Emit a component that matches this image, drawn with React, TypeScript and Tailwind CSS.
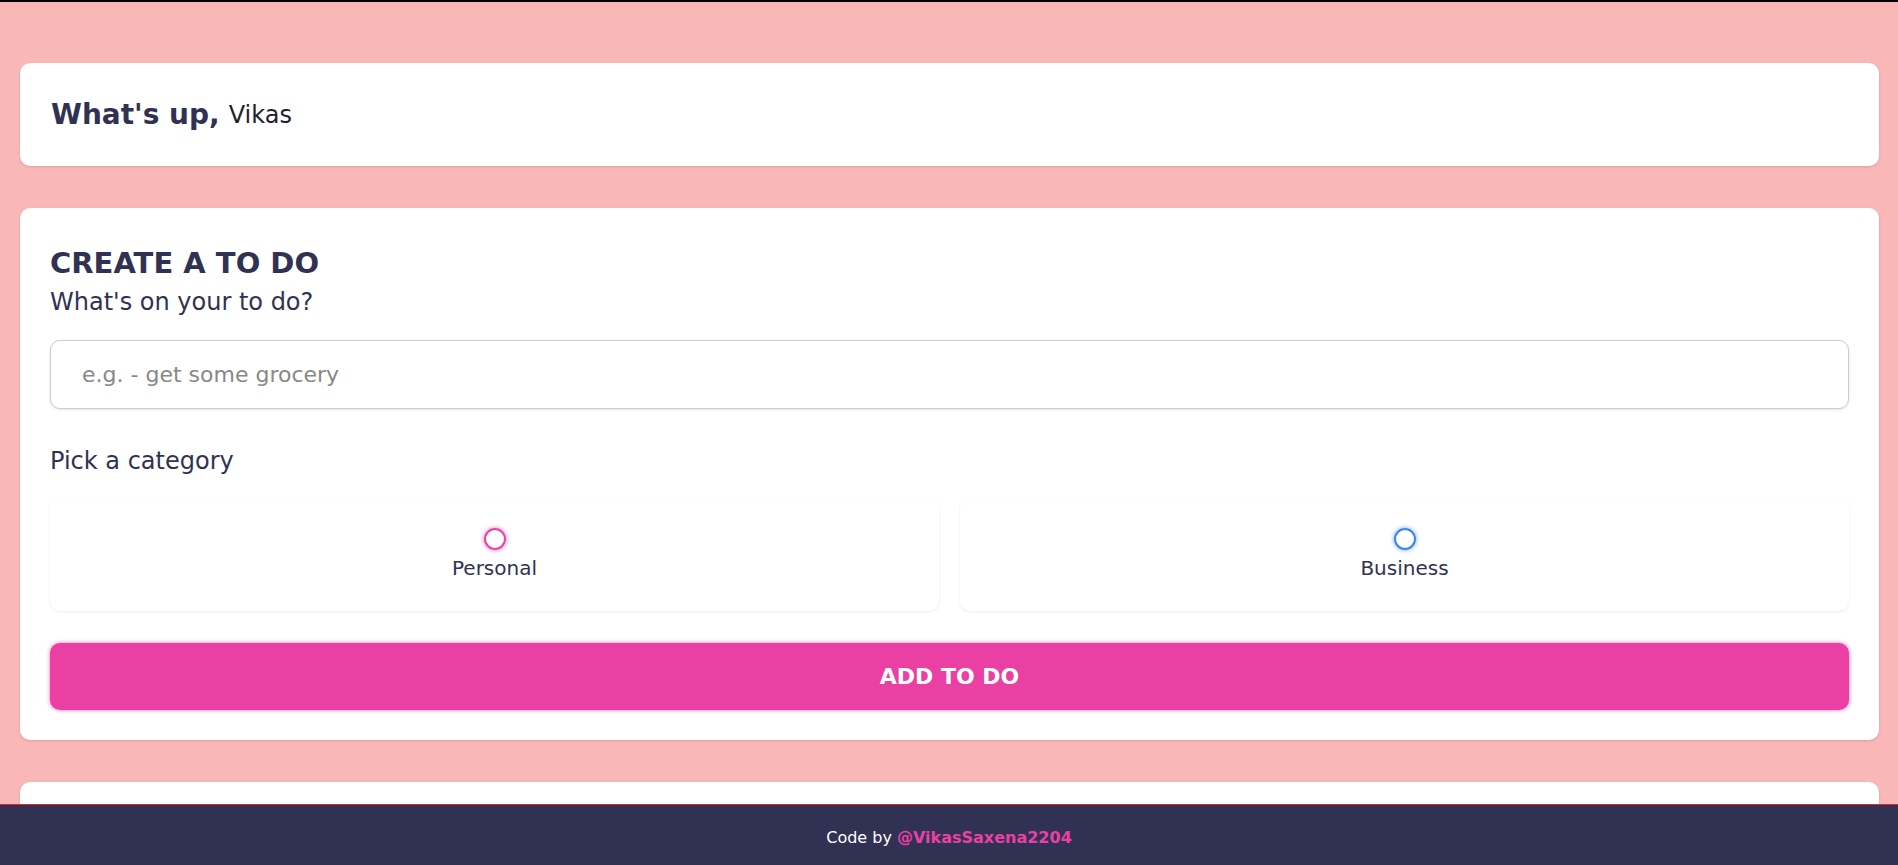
import React, { useState } from 'react';

const FONT = { fontFamily: '"DejaVu Sans", "Noto Sans", sans-serif' };

type Category = 'personal' | 'business';

const Bubble: React.FC<{ kind: Category; checked: boolean }> = ({ kind, checked }) => (
  <span
    className={`flex items-center justify-center w-[22px] h-[22px] rounded-full border-2 ${
      kind === 'personal'
        ? 'border-[#ea40a4] shadow-[0_0_4px_rgba(234,64,164,0.75)]'
        : 'border-[#3a82ee] shadow-[0_0_4px_rgba(58,130,238,0.75)]'
    }`}
  >
    {checked && (
      <span className={`w-[10px] h-[10px] rounded-full ${kind === 'personal' ? 'bg-[#ea40a4]' : 'bg-[#3a82ee]'}`} />
    )}
  </span>
);

export default function App() {
  const [todo, setTodo] = useState('');
  const [category, setCategory] = useState<Category | null>(null);

  return (
    <div style={FONT} className="h-[865px] flex flex-col bg-[#fab7b7] border-t-2 border-black text-[#313154]">
      {/* Main */}
      <main className="flex-1 overflow-hidden pt-[61px] pl-5 pr-[19px] flex flex-col gap-[42px]">
        {/* Greeting */}
        <section className="h-[103px] shrink-0 bg-white rounded-[10px] shadow-[0_1px_3px_rgba(0,0,0,0.12)] px-[31px] flex items-center">
          <h2 className="text-[28px] leading-[34px] font-bold text-[#313154]">What's up,</h2>
          <span className="ml-[9px] text-[24px] leading-[34px] text-[#1f1f2e]">Vikas</span>
        </section>

        {/* Create */}
        <section className="shrink-0 bg-white rounded-[10px] shadow-[0_1px_3px_rgba(0,0,0,0.12)] px-[30px] pt-[38px] pb-[30px]">
          <h3 className="text-[29px] leading-[34px] font-bold uppercase">Create a to do</h3>
          <p className="mt-[7px] text-[24px] leading-[30px]">What's on your to do?</p>

          <input
            type="text"
            value={todo}
            onChange={(e) => setTodo(e.target.value)}
            placeholder="e.g. - get some grocery"
            style={FONT}
            className="mt-[23px] block w-full h-[69px] px-[31px] text-[22px] text-[#313154] placeholder:text-[#888] bg-white border border-[#cccccc] rounded-[10px] shadow-[0_1px_3px_rgba(0,0,0,0.1)] outline-none"
          />

          <p className="mt-[37px] text-[24px] leading-[30px]">Pick a category</p>

          <div className="mt-[21px] grid grid-cols-2 gap-[21px]">
            {(['personal', 'business'] as Category[]).map((c) => (
              <label
                key={c}
                onClick={() => setCategory(c)}
                className="h-[114px] flex flex-col items-center justify-center bg-white rounded-[10px] shadow-[0_1px_3px_rgba(0,0,0,0.08)] cursor-pointer"
              >
                <Bubble kind={c} checked={category === c} />
                <span className="mt-[6px] text-[20px] leading-[24px] capitalize">{c}</span>
              </label>
            ))}
          </div>

          <button
            style={FONT}
            className="mt-[32px] w-full h-[67px] bg-[#ea40a4] rounded-[10px] text-white text-[22px] font-bold uppercase shadow-[0_0_4px_rgba(234,64,164,0.75)]"
          >
            Add to do
          </button>
        </section>

        {/* Todo list (cut off) */}
        <section className="h-[120px] shrink-0 bg-white rounded-[10px] shadow-[0_1px_3px_rgba(0,0,0,0.12)]" />
      </main>

      {/* Footer */}
      <footer className="h-[61px] shrink-0 pt-[6px] bg-[#313154] border-t border-[#e0262b] flex items-center justify-center text-[16px] text-white">
        Code by&nbsp;<a href="#" className="font-bold text-[#ea40a4]">@VikasSaxena2204</a>
      </footer>
    </div>
  );
}
